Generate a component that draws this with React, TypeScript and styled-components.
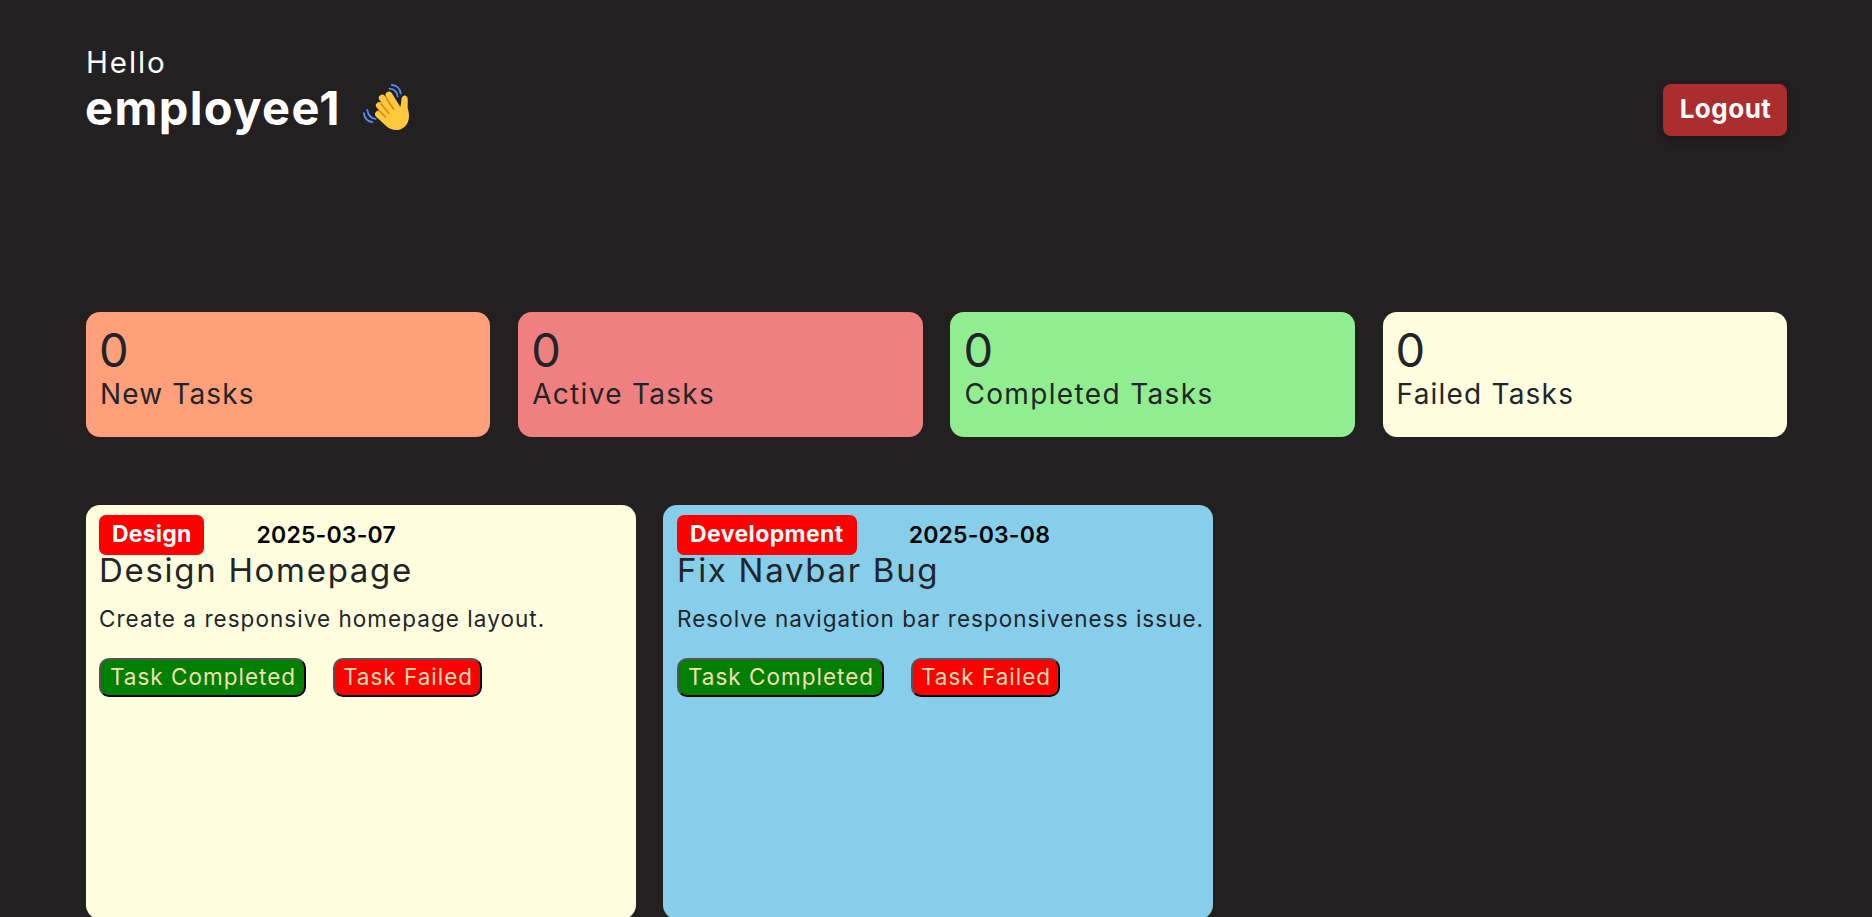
import React from 'react';
import styled, { createGlobalStyle } from 'styled-components';

const GlobalStyle = createGlobalStyle`
  * { box-sizing: border-box; }
  html, body { margin: 0; padding: 0; height: 100%; overflow: hidden; }
  body {
    background: #232021;
    color: #212529;
    font-family: Inter, "Liberation Sans", sans-serif;
    font-weight: 400;
  }
  h1, h2, h3, h4, p { margin: 0; font-weight: 400; }
`;

const Page = styled.main`
  height: 917px;
  overflow: hidden;
  padding: 44px 85px 0 86px;
`;

const Header = styled.header`
  display: flex;
  justify-content: space-between;
  height: 268px;
  color: #fff;
`;

const Greeting = styled.div`
  display: flex;
  flex-direction: column;
`;

const Hello = styled.p`
  font-size: 29.5px;
  line-height: 36px;
  letter-spacing: 1.9px;
`;

const NameRow = styled.div`
  display: flex;
  align-items: center;
  gap: 24px;
  height: 56px;
`;

const UserName = styled.h1`
  font-size: 47px;
  font-weight: 700;
  line-height: 56px;
  margin-left: -1px;
  letter-spacing: 1.4px;
  width: 254px;
  white-space: nowrap;
`;

const LogoutButton = styled.button`
  width: 124px;
  height: 52px;
  margin-top: 40px;
  padding: 0 0 3px 1px;
  border: 0;
  border-radius: 8px;
  background: #ab2d2e;
  box-shadow: 0 4px 8px rgba(0, 0, 0, 0.28);
  color: #fff;
  font: 650 26px Inter, "Liberation Sans", sans-serif;
  letter-spacing: 0.5px;
`;

const Stats = styled.section`
  display: grid;
  grid-template-columns: repeat(4, 1fr);
  gap: 27.8px;
`;

const StatCard = styled.article<{ $color: string }>`
  height: 125px;
  padding: 11px 14px 0;
  border-radius: 14px;
  background: ${(p) => p.$color};
`;

const StatCount = styled.h2`
  font-size: 47px;
  line-height: 54px;
  margin-left: -1px;
`;

const StatLabel = styled.h3<{ $tracking: number }>`
  font-size: 28px;
  line-height: 34px;
  letter-spacing: ${(p) => p.$tracking}px;
  white-space: nowrap;
`;

const TaskList = styled.section`
  display: flex;
  gap: 27px;
  margin-top: 68px;
`;

const TaskCard = styled.article<{ $color: string; $inset: number }>`
  width: 550px;
  height: 414px;
  padding: 10px 0 0 ${(p) => p.$inset}px;
  border-radius: 14px;
  background: ${(p) => p.$color};
`;

const TaskMeta = styled.div`
  display: flex;
  align-items: center;
  gap: 52px;
  height: 40px;
  margin-left: -1px;
`;

const Tag = styled.span<{ $tracking: number }>`
  height: 40px;
  padding: 0 13px 0 13px;
  border-radius: 7px;
  background: #f00;
  color: #fff;
  font-size: 23px;
  font-weight: 650;
  line-height: 39px;
  letter-spacing: ${(p) => p.$tracking}px;
`;

const DueDate = styled.time`
  color: #000;
  font-size: 23px;
  font-weight: 600;
  line-height: 38px;
  letter-spacing: 0.2px;
`;

const TaskTitle = styled.h2<{ $tracking: number }>`
  font-size: 33px;
  line-height: 38px;
  margin: -4px 0 0 -1px;
  letter-spacing: ${(p) => p.$tracking}px;
`;

const TaskText = styled.p<{ $tracking: number }>`
  margin: 13px 0 0 -1px;
  font-size: 22.5px;
  line-height: 34px;
  letter-spacing: ${(p) => p.$tracking}px;
  white-space: nowrap;
`;

const Actions = styled.div`
  display: flex;
  gap: 27px;
  margin: 22px 0 0 -1px;
`;

const ActionButton = styled.button<{ $color: string; $width: number }>`
  width: ${(p) => p.$width}px;
  height: 39px;
  padding: 0 0 3px 1px;
  border: 2px outset #000;
  border-radius: 10px;
  background: ${(p) => p.$color};
  color: #f5deb3;
  font: 400 22.5px Inter, "Liberation Sans", sans-serif;
  letter-spacing: 1px;
  white-space: nowrap;
`;

const WavingHand = () => (
  <svg width="48" height="48" viewBox="0 0 48 48" role="img" aria-label="Waving hand">
    <path
      d="M26 11L34 24M19.3 14L30 29M16.3 21.5L27 33M15.5 30L26 38"
      fill="none"
      stroke="#ffc83d"
      strokeWidth="6.8"
      strokeLinecap="round"
    />
    <path
      d="M27 20L34 23C37 26 38 22 38.3 16C38.6 10 45 10 44.8 16L44.6 24C47 31 46.5 38 42 42.5C36 48 28 47 22 41L13 32.5L18 27Z"
      fill="#ffc83d"
    />
    <path
      d="M24 15.5L30.5 25M18.2 20L26 29.5M16.5 27L22.5 33"
      fill="none"
      stroke="#d98a0b"
      strokeWidth="1.6"
      strokeLinecap="round"
    />
    <path
      d="M28.8 1C33.5 1 37 4.5 37.8 9.5M26.5 4.7C31 5 34 8 34.6 12.5M0.8 29.2C1.5 34 4.8 37.5 9.5 38.2M4.3 25.8C5 31 8 34.2 12.6 34.9"
      fill="none"
      stroke="#508df5"
      strokeWidth="1.8"
      strokeLinecap="round"
    />
  </svg>
);

const stats = [
  { label: 'New Tasks', color: '#ffa07a', tracking: 1.15 },
  { label: 'Active Tasks', color: '#f08080', tracking: 1.3 },
  { label: 'Completed Tasks', color: '#90ee90', tracking: 1.35 },
  { label: 'Failed Tasks', color: '#ffffe0', tracking: 1.2 },
];

const tasks = [
  {
    tag: 'Design', tagTracking: 0.2, date: '2025-03-07', title: 'Design Homepage', inset: 14,
    titleTracking: 1.7, text: 'Create a responsive homepage layout.', textTracking: 1.04, color: '#ffffe0',
  },
  {
    tag: 'Development', tagTracking: 0.4, date: '2025-03-08', title: 'Fix Navbar Bug', inset: 15,
    titleTracking: 1.7, text: 'Resolve navigation bar responsiveness issue.', textTracking: 1.02, color: '#87ceeb',
  },
];

export default function App() {
  return (
    <>
      <GlobalStyle />
      <Page>
        <Header>
          <Greeting>
            <Hello>Hello</Hello>
            <NameRow>
              <UserName>employee1</UserName>
              <WavingHand />
            </NameRow>
          </Greeting>
          <LogoutButton>Logout</LogoutButton>
        </Header>
        <Stats>
          {stats.map((s) => (
            <StatCard key={s.label} $color={s.color}>
              <StatCount>0</StatCount>
              <StatLabel $tracking={s.tracking}>{s.label}</StatLabel>
            </StatCard>
          ))}
        </Stats>
        <TaskList>
          {tasks.map((t) => (
            <TaskCard key={t.title} $color={t.color} $inset={t.inset}>
              <TaskMeta>
                <Tag $tracking={t.tagTracking}>{t.tag}</Tag>
                <DueDate>{t.date}</DueDate>
              </TaskMeta>
              <TaskTitle $tracking={t.titleTracking}>{t.title}</TaskTitle>
              <TaskText $tracking={t.textTracking}>{t.text}</TaskText>
              <Actions>
                <ActionButton $color="#008000" $width={207}>Task Completed</ActionButton>
                <ActionButton $color="#ff0000" $width={149}>Task Failed</ActionButton>
              </Actions>
            </TaskCard>
          ))}
        </TaskList>
      </Page>
    </>
  );
}
